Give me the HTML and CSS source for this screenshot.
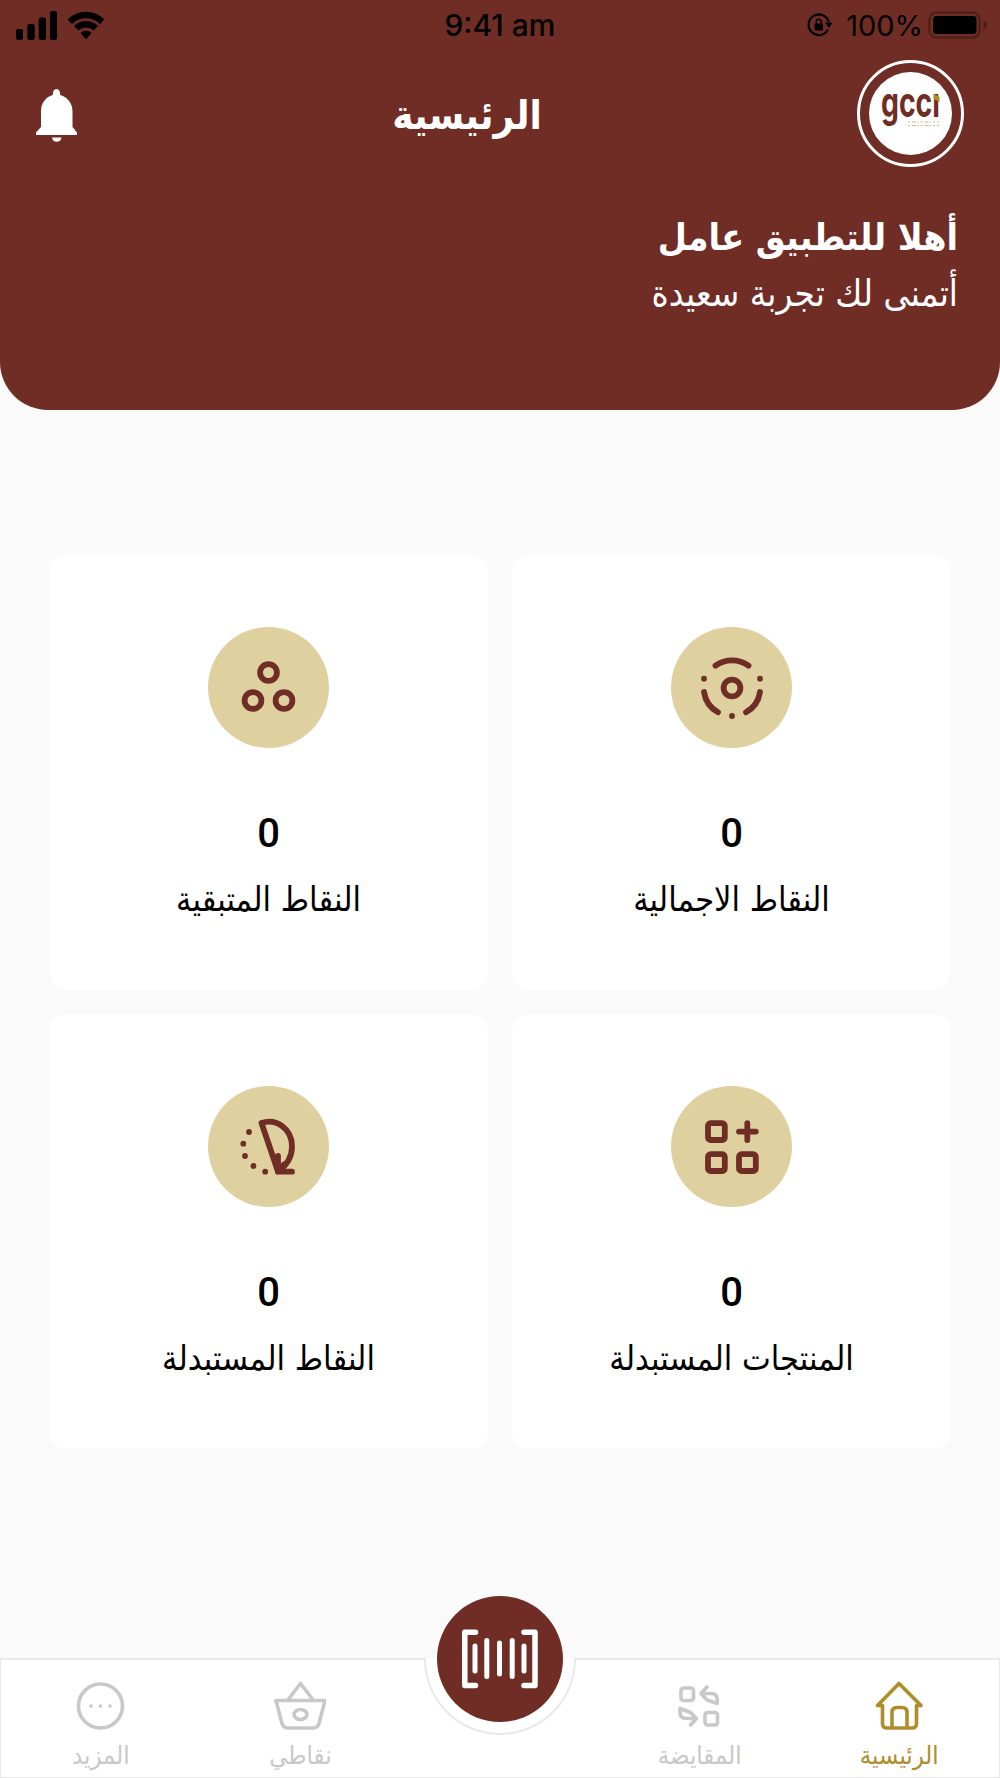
FILE: index.html
```
<!DOCTYPE html>
<html lang="ar" dir="rtl">
<head>
	<meta charset="UTF-8">
	<title>الرئيسية</title>
	<link rel="stylesheet" href="styles.css">
</head>
<body>
	<header class="header">
		<div class="status" dir="ltr">
			<div class="status-left">
				<svg width="41" height="29" viewBox="0 0 41 29">
					<rect x="0" y="18" width="7" height="11" rx="2"/>
					<rect x="11.3" y="13" width="7.4" height="16" rx="2"/>
					<rect x="22.7" y="6.5" width="7.3" height="22.5" rx="2"/>
					<rect x="34" y="0" width="7" height="29" rx="2"/>
				</svg>
				<svg width="38" height="30" viewBox="0 0 38 30">
					<path d="M0.5 9.5A26 26 0 0 1 37.5 9.5L33 14A20 20 0 0 0 5 14Z"/>
					<path d="M7 16A17 17 0 0 1 31 16L26.5 20.5A11 11 0 0 0 11.5 20.5Z"/>
					<path d="M13.5 23A8 8 0 0 1 24.5 23L19 29.5Z"/>
				</svg>
			</div>
			<span class="time">9:41 am</span>
			<div class="status-right">
				<svg class="lock" width="26" height="24" viewBox="0 0 26 24">
					<path d="M20.5 17.5A10.3 10.3 0 1 1 21.5 8" fill="none" stroke="#000" stroke-width="2.2" stroke-linecap="round"/>
					<path d="M18 9.5H25.5L22 15Z"/>
					<rect x="7.5" y="10.5" width="8.5" height="7" rx="1"/>
					<path d="M9.3 11V8.7a2.5 2.5 0 0 1 5 0V11" fill="none" stroke="#000" stroke-width="1.5"/>
				</svg>
				<span class="percent">100%</span>
				<svg width="60" height="28" viewBox="0 0 60 28">
					<rect x="1.5" y="1.5" width="50" height="25" rx="6.5" fill="none" stroke="#4b1e18" stroke-width="2.2"/>
					<rect x="5" y="5" width="43.5" height="18" rx="3.5"/>
					<path d="M55.5 9.5Q59 11 59 14T55.5 18.5Z" fill="#4b1e18"/>
				</svg>
			</div>
		</div>
		<div class="topbar">
			<div class="avatar">
				<svg width="83" height="83" viewBox="0 0 83 83">
					<circle cx="41.5" cy="41.5" r="41.5" fill="#fff"/>
					<text class="logo-text" x="12" y="45" textLength="59" lengthAdjust="spacingAndGlyphs">gccı</text>
					<path d="M64.5 21.5L70.5 25V30L64.5 27Z" fill="#b08d25"/>
					<path d="M39 50H70M39 53.5H70" stroke="#c9b987" stroke-width="1.2" stroke-dasharray="2 2 4 1.5 1 2"/>
				</svg>
			</div>
			<h1 class="title">الرئيسية</h1>
			<svg class="bell" width="41" height="54" viewBox="0 0 41 54">
				<path d="M20.5 0C23 0 24.2 2 24.2 6C31.5 8 36.5 14.5 36.5 22V38L41 43.5V46H0V43.5L5 38V22C5 14.5 9.5 8 16.8 6C16.8 2 18 0 20.5 0Z"/>
				<path d="M16 48.5H25.5A4.8 5 0 0 1 16 48.5Z"/>
			</svg>
		</div>
		<div class="welcome">
			<p class="hello">أهلا للتطبيق عامل</p>
			<p class="wish">أتمنى لك تجربة سعيدة</p>
		</div>
	</header>

	<main class="cards">
		<div class="card">
			<div class="card-icon">
				<svg width="66" height="66" viewBox="0 0 66 66">
					<circle cx="33" cy="33" r="8.4"/>
					<path d="M16.5 10.7A28 28 0 0 1 49.5 10.7M5 37A28 28 0 0 0 19 57.3M61 37A28 28 0 0 1 47 57.3"/>
					<path d="M5 23.7h.01M61 23.7h.01M33 61h.01"/>
				</svg>
			</div>
			<div class="num">0</div>
			<div class="label">النقاط الاجمالية</div>
		</div>
		<div class="card">
			<div class="card-icon">
				<svg width="66" height="66" viewBox="0 0 66 66">
					<circle cx="32.5" cy="17.5" r="8.4"/>
					<circle cx="17" cy="45.5" r="8.4"/>
					<circle cx="48" cy="45.5" r="8.4"/>
				</svg>
			</div>
			<div class="num">0</div>
			<div class="label">النقاط المتبقية</div>
		</div>
		<div class="card">
			<div class="card-icon">
				<svg width="66" height="66" viewBox="0 0 66 66">
					<rect x="9" y="9.2" width="16.8" height="16.8" rx="2.5"/>
					<rect x="9" y="40.2" width="16.8" height="16.8" rx="2.5"/>
					<rect x="40" y="40.2" width="16.8" height="16.8" rx="2.5"/>
					<path d="M48.3 9.2V26M40 17.6H56.8"/>
				</svg>
			</div>
			<div class="num">0</div>
			<div class="label">المنتجات المستبدلة</div>
		</div>
		<div class="card">
			<div class="card-icon">
				<svg width="66" height="66" viewBox="0 0 66 66">
					<path d="M25.5 9C40 4 56 14.5 56 32.5C56 43 50.5 51.5 42 57.5Z"/>
					<path d="M42 42V57.7H56M42 57.5L48 50.5"/>
					<path d="M13 18h.01M7.3 29.7h.01M9 42h.01M17.5 52h.01M29.2 57.7h.01"/>
				</svg>
			</div>
			<div class="num">0</div>
			<div class="label">النقاط المستبدلة</div>
		</div>
	</main>

	<nav class="navbar">
		<a class="nav-item active">
			<svg width="52" height="52" viewBox="0 0 52 52">
				<path d="M4.5 25.5L26 3.5L48 25.5M4.5 25.5H9.5V43.5Q9.5 48 14 48H39Q43.5 48 43.5 43.5V25.5H48M19 48V32.5Q19 27.5 24 27.5H29Q34 27.5 34 32.5V48"/>
			</svg>
			<span>الرئيسية</span>
		</a>
		<a class="nav-item">
			<svg width="52" height="52" viewBox="0 0 52 52">
				<rect x="7" y="8" width="12.5" height="12.5" rx="2.5"/>
				<rect x="31" y="32.5" width="12.5" height="12.5" rx="2.5"/>
				<path d="M33 7L27 13.5L33 20L43.3 23.5V20Q43.3 13.5 37 13.5H27"/>
				<path d="M16.5 45L22.5 38.5L16.5 32.5L6 28.5V32.5Q6 38.5 12.5 38.5H22.5"/>
			</svg>
			<span>المقايضة</span>
		</a>
		<div class="nav-item"></div>
		<a class="nav-item">
			<svg width="52" height="52" viewBox="0 0 52 52">
				<path d="M2 20.5H51L45 43.5Q43.5 48 39 48H14Q9.5 48 8 43.5ZM13.5 20.5L26.5 3.5L39.5 20.5"/>
				<ellipse cx="26.5" cy="34.5" rx="6.5" ry="5"/>
			</svg>
			<span>نقاطي</span>
		</a>
		<a class="nav-item">
			<svg width="52" height="52" viewBox="0 0 52 52">
				<circle cx="25.5" cy="26" r="22"/>
				<path d="M16 26h.01M25.5 26h.01M35 26h.01"/>
			</svg>
			<span>المزيد</span>
		</a>
		<div class="notch"></div>
		<div class="scan">
			<svg width="76" height="60" viewBox="0 0 76 60">
				<path d="M13.5 3.2H2.8V56.5H13.5M62 3.2H73V56.5H62" stroke-width="5.5"/>
				<path d="M13 17V42M24.8 11.5V47.5M37.5 14V45M50.2 11.5V47.5M62 17V42" stroke-width="5"/>
			</svg>
		</div>
	</nav>
</body>
</html>
```
FILE: styles.css
```
* { margin: 0; padding: 0; box-sizing: border-box; }
body {
	height: 1778px;
	display: flex;
	flex-direction: column;
	background-color: #fafafa;
	font-family: "DejaVu Sans Condensed", "DejaVu Sans", sans-serif;
	overflow: hidden;
}
svg { display: block; }

/* header */
.header {
	height: 410px;
	background-color: #702d25;
	border-radius: 0 0 48px 48px;
	color: #fff;
}
.status {
	height: 50px;
	padding: 0 12px 0 16px;
	display: grid;
	grid-template-columns: 1fr auto 1fr;
	align-items: center;
	color: #000;
	font-family: Inter, "Liberation Sans", sans-serif;
}
.status-left {
	display: flex;
	gap: 10px;
	align-items: flex-end;
}
.time {
	font-size: 30px;
	font-weight: 500;
	margin-right: 4px;
}
.status-right {
	display: flex;
	justify-content: flex-end;
	align-items: center;
}
.lock { margin-right: 13px; }
.percent {
	font-size: 29px;
	margin-right: 5px;
}
.topbar {
	height: 127px;
	padding: 0 36px;
	display: flex;
	justify-content: space-between;
	align-items: center;
}
.avatar {
	width: 107px;
	height: 107px;
	border: 3px solid #fff;
	border-radius: 50%;
	display: flex;
	align-items: center;
	justify-content: center;
}
.avatar svg { flex-shrink: 0; }
.logo-text {
	font: bold 42px Inter, sans-serif;
	fill: #702d25;
	direction: ltr;
}
.title {
	font-size: 40px;
	line-height: 50px;
	padding-top: 2px;
}
.bell {
	fill: #fff;
	margin-top: 25px;
	margin-bottom: 0;
	align-self: flex-start;
	margin-top: 39px;
}
.welcome { padding: 33px 42px 0; }
.hello {
	font-size: 37.3px;
	font-weight: bold;
	line-height: 54px;
}
.wish {
	font-size: 36.5px;
	line-height: 60px;
}

/* cards */
.cards {
	display: grid;
	grid-template-columns: 1fr 1fr;
	grid-auto-rows: 435px;
	gap: 24px;
	padding: 145px 49px 0;
}
.card {
	background-color: #fff;
	border-radius: 17px;
	display: flex;
	flex-direction: column;
	align-items: center;
	padding-top: 72px;
}
.card-icon {
	width: 121px;
	height: 121px;
	border-radius: 50%;
	background-color: #dfd19f;
	display: flex;
	align-items: center;
	justify-content: center;
}
.card-icon svg {
	fill: none;
	stroke: #702d25;
	stroke-width: 5.8px;
	stroke-linecap: round;
	stroke-linejoin: round;
}
.num {
	margin-top: 59px;
	font: 500 40px/54px Roboto, sans-serif;
}
.label {
	margin-top: 12px;
	font-size: 34px;
	line-height: 52px;
}

/* bottom bar */
.navbar {
	position: relative;
	margin-top: auto;
	height: 120px;
	background-color: #fff;
	border: 2px solid #e9e9e9;
	border-width: 2px 1px 1px;
	display: grid;
	grid-template-columns: repeat(5, 1fr);
}
.nav-item {
	display: flex;
	flex-direction: column;
	align-items: center;
	padding-top: 20px;
	color: #c8c8c8;
	font-size: 25.5px;
	line-height: 34px;
}
.nav-item svg {
	fill: none;
	stroke: currentColor;
	stroke-width: 3.6px;
	stroke-linecap: round;
	stroke-linejoin: round;
}
.nav-item span { margin-top: 6px; }
.active { color: #b08d2b; }
/* half ring under the scan button */
.notch {
	position: absolute;
	left: 50%;
	top: -2px;
	width: 152px;
	height: 77px;
	margin-left: -76px;
	border: 2px solid #e9e9e9;
	border-top: none;
	border-radius: 0 0 76px 76px;
	background-color: #fff;
}
.scan {
	position: absolute;
	left: 50%;
	top: -64px;
	width: 126px;
	height: 126px;
	margin-left: -63px;
	border-radius: 50%;
	background-color: #702d25;
	display: flex;
	align-items: center;
	justify-content: center;
}
.scan svg {
	fill: none;
	stroke: #fff;
	stroke-linecap: round;
	stroke-linejoin: round;
}
```
